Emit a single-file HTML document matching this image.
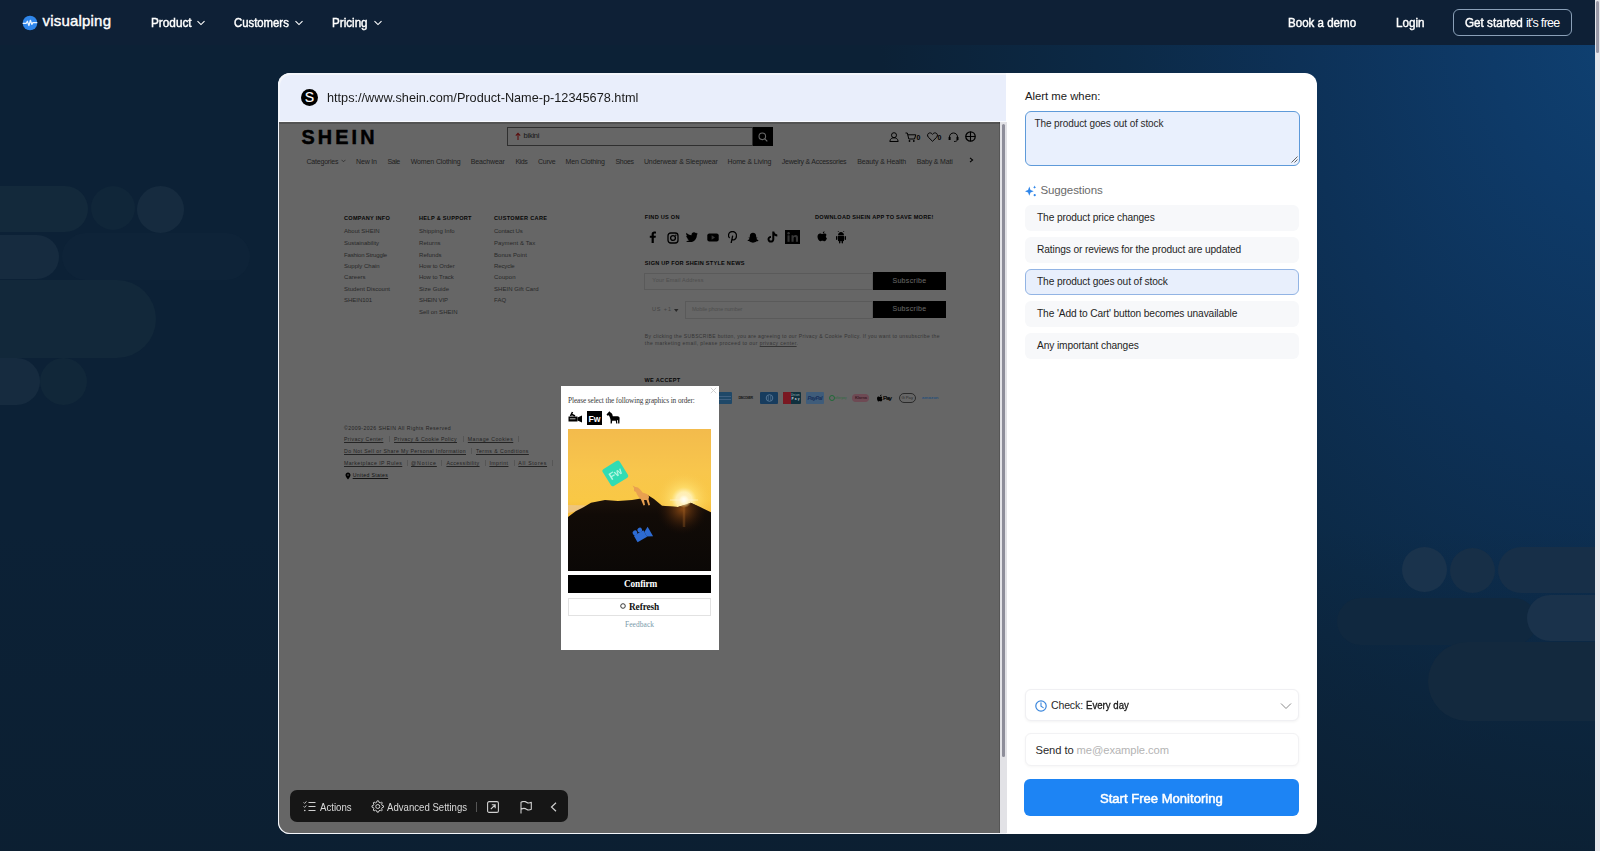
<!DOCTYPE html><html><head><meta charset="utf-8"><style>
*{box-sizing:border-box;margin:0;padding:0}
html,body{width:1600px;height:851px;overflow:hidden}
body{position:relative;font-family:"Liberation Sans",sans-serif;background:#0c2136;color:#111}
.a{position:absolute}
.t{position:absolute;white-space:nowrap;line-height:1}
.sh{position:absolute;border-radius:999px}
</style></head><body>
<div class="a" style="left:0;top:45px;width:1595px;height:806px;overflow:hidden;background:#0c2136">
<div class="a" style="left:0;top:0;width:1595px;height:806px;background:radial-gradient(ellipse 760px 980px at 1640px -30px,#0f4274 0%,#0e3a68 20%,#0d3157 45%,#0c2a47 68%,rgba(12,33,54,0) 100%)"></div>
<div class="a" style="left:0;top:0;width:1595px;height:806px;background:linear-gradient(180deg,rgba(12,30,47,0) 60%,rgba(12,30,47,0.6) 100%)"></div>
<div class="sh" style="left:-40px;top:141.0px;width:128px;height:46px;background:#13293b;filter:blur(0.7px)"></div>
<div class="sh" style="left:91px;top:141.0px;width:44px;height:44px;background:#102639;filter:blur(0.7px)"></div>
<div class="sh" style="left:136.5px;top:141.0px;width:47px;height:47px;background:#162b3f;filter:blur(0.7px)"></div>
<div class="sh" style="left:62px;top:188.0px;width:188px;height:47px;background:#0e2338;filter:blur(0.7px)"></div>
<div class="sh" style="left:-40px;top:189.6px;width:99px;height:44px;background:#162b3f;filter:blur(0.7px)"></div>
<div class="sh" style="left:-40px;top:235.0px;width:196px;height:78px;background:#12283a;filter:blur(0.7px)"></div>
<div class="sh" style="left:-40px;top:313.0px;width:80px;height:47px;background:#162b3f;filter:blur(0.7px)"></div>
<div class="sh" style="left:39.5px;top:313.0px;width:47px;height:47px;background:#112739;filter:blur(0.7px)"></div>
<div class="sh" style="left:1402.3px;top:502.0px;width:45px;height:45px;background:#1a334c;filter:blur(0.7px)"></div>
<div class="sh" style="left:1450px;top:503.0px;width:45px;height:45px;background:#172f47;filter:blur(0.7px)"></div>
<div class="sh" style="left:1497.5px;top:502.0px;width:150px;height:46px;background:#172f48;filter:blur(0.7px)"></div>
<div class="sh" style="left:1336.5px;top:552.6px;width:200px;height:47px;background:#10283f;filter:blur(0.7px)"></div>
<div class="sh" style="left:1527px;top:549.8px;width:120px;height:46.25px;background:#1a324b;filter:blur(0.7px)"></div>
<div class="sh" style="left:1428px;top:597.0px;width:220px;height:79px;background:#13293e;filter:blur(0.7px)"></div>
</div>
<div class="a" style="left:0.00px;top:0.00px;width:1595.00px;height:45.00px;background:#0e2036"></div>
<svg class="a" style="left:22.00px;top:15.00px;" width="16" height="16" viewBox="0 0 16 16"><circle cx="8" cy="8" r="7.3" fill="#2f86ea"/><path d="M1.2 8.3 H4.2 L5.4 6.2 L6.9 10.6 L8.4 5.3 L9.8 9.4 L10.9 7.6 H14.8" fill="none" stroke="#eaf4ff" stroke-width="1.3" stroke-linejoin="round" stroke-linecap="round"/></svg>
<div class="t" style="left:42.50px;top:13.45px;font-size:15px;color:#fff;letter-spacing:0.199px;-webkit-text-stroke:0.4px #fff">visualping</div>
<div class="t" style="left:150.60px;top:16.57px;font-size:12.5px;color:#fff;transform:scaleX(0.9425);transform-origin:0 0;-webkit-text-stroke:0.45px #fff">Product</div>
<svg class="a" style="left:196.00px;top:20.00px;" width="10" height="6" viewBox="0 0 10 6"><path d="M1.5 1.2 L5 4.6 L8.5 1.2" fill="none" stroke="#fff" stroke-width="1.1"/></svg>
<div class="t" style="left:234.00px;top:16.57px;font-size:12.5px;color:#fff;transform:scaleX(0.9068);transform-origin:0 0;-webkit-text-stroke:0.45px #fff">Customers</div>
<svg class="a" style="left:294.00px;top:20.00px;" width="10" height="6" viewBox="0 0 10 6"><path d="M1.5 1.2 L5 4.6 L8.5 1.2" fill="none" stroke="#fff" stroke-width="1.1"/></svg>
<div class="t" style="left:332.00px;top:16.57px;font-size:12.5px;color:#fff;transform:scaleX(0.9317);transform-origin:0 0;-webkit-text-stroke:0.45px #fff">Pricing</div>
<svg class="a" style="left:373.00px;top:20.00px;" width="10" height="6" viewBox="0 0 10 6"><path d="M1.5 1.2 L5 4.6 L8.5 1.2" fill="none" stroke="#fff" stroke-width="1.1"/></svg>
<div class="t" style="left:1288.40px;top:16.57px;font-size:12.5px;color:#fff;transform:scaleX(0.9246);transform-origin:0 0;-webkit-text-stroke:0.45px #fff">Book a demo</div>
<div class="t" style="left:1396.30px;top:16.57px;font-size:12.5px;color:#fff;transform:scaleX(0.9318);transform-origin:0 0;-webkit-text-stroke:0.45px #fff">Login</div>
<div class="a" style="left:1453.00px;top:9.00px;width:119.00px;height:27.00px;background:transparent;border:1px solid #8aa0b8;border-radius:6px"></div>
<div class="t" style="left:1464.70px;top:16.57px;font-size:12.5px;color:#fff;transform:scaleX(0.9347);transform-origin:0 0;-webkit-text-stroke:0.45px #fff">Get started</div>
<div class="t" style="left:1526.00px;top:16.57px;font-size:12.5px;color:#fff;letter-spacing:-0.7px">it's free</div>
<div class="a" style="left:1595.00px;top:0.00px;width:5.00px;height:851.00px;background:#e6e6ea"></div>
<div class="a" style="left:1596.00px;top:1.00px;width:3.00px;height:52.00px;background:#9b9aa8;border-radius:2px"></div>
<div class="a" style="left:278.00px;top:73.00px;width:1039.00px;height:761.00px;background:#fff;border-radius:12px"></div>
<div class="a" style="left:278.00px;top:73.00px;width:728.00px;height:761.00px;background:#f4f6fb;border-top-left-radius:12px;border-bottom-left-radius:12px"></div>
<div class="a" style="left:279.50px;top:74.50px;width:726.50px;height:46.50px;background:#e9eefb;border-top-left-radius:11px"></div>
<div class="a" style="left:278.00px;top:121.00px;width:728.00px;height:1.00px;background:#f8faff"></div>
<svg class="a" style="left:301.00px;top:89.00px;" width="17" height="17" viewBox="0 0 17 17"><circle cx="8.5" cy="8.5" r="8.5" fill="#000"/><text x="8.5" y="13.4" text-anchor="middle" font-family="Liberation Sans" font-size="14" fill="#fff" stroke="#fff" stroke-width="0.15">S</text></svg>
<div class="t" style="left:326.70px;top:90.54px;font-size:13.6px;color:#1a1a1a;transform:scaleX(0.9343);transform-origin:0 0">https://www.shein.com/Product-Name-p-12345678.html</div>
<div class="a" style="left:279px;top:122px;width:721px;height:711px;overflow:hidden;background:#fff;border-bottom-left-radius:11px" id="shot">
<div class="t" style="left:22.50px;top:5.77px;font-size:19.8px;color:#000;font-weight:700;letter-spacing:3.136px;-webkit-text-stroke:0.5px #000">SHEIN</div>
<div class="a" style="left:228.00px;top:5.35px;width:245.50px;height:18.90px;background:#fff;border:1.6px solid #777"></div>
<div class="a" style="left:473.50px;top:5.35px;width:20.00px;height:18.90px;background:#000"></div>
<svg class="a" style="left:478.50px;top:9.50px;" width="10" height="10" viewBox="0 0 10 10"><circle cx="4.3" cy="4.3" r="3.3" fill="none" stroke="#fff" stroke-width="1.1"/><path d="M6.8 6.8 L9.3 9.3" stroke="#fff" stroke-width="1.2"/></svg>
<svg class="a" style="left:235.50px;top:10.00px;" width="6" height="8" viewBox="0 0 6 8"><path d="M3 8 V1.5 M0.8 3.6 L3 1.2 L5.2 3.6" fill="none" stroke="#e02020" stroke-width="1.1"/></svg>
<div class="t" style="left:244.60px;top:9.93px;font-size:7.5px;color:#3a3a3a;letter-spacing:-0.258px">bikini</div>
<svg class="a" style="left:609.50px;top:9.50px;" width="10" height="10" viewBox="0 0 10 10"><circle cx="5" cy="3.2" r="2.5" fill="none" stroke="#000" stroke-width="1"/><path d="M0.8 9.5 C1.2 6.5 3 5.8 5 5.8 C7 5.8 8.8 6.5 9.2 9.5 Z" fill="none" stroke="#000" stroke-width="1"/></svg>
<svg class="a" style="left:626.00px;top:9.50px;" width="12" height="10" viewBox="0 0 12 10"><path d="M0.5 1 H2.3 L3.8 7 H9.5 L10.8 2.8 H3" fill="none" stroke="#000" stroke-width="1"/><circle cx="4.5" cy="9" r="0.9" fill="#000"/><circle cx="8.8" cy="9" r="0.9" fill="#000"/></svg>
<div class="t" style="left:637.50px;top:11.85px;font-size:7px;color:#000;font-weight:700;letter-spacing:0.607px">0</div>
<svg class="a" style="left:647.50px;top:9.50px;" width="11" height="10" viewBox="0 0 11 10"><path d="M5.5 9.3 L1.3 5.2 C0 3.8 0.4 1.3 2.6 0.9 C3.9 0.7 4.9 1.5 5.5 2.4 C6.1 1.5 7.1 0.7 8.4 0.9 C10.6 1.3 11 3.8 9.7 5.2 Z" fill="none" stroke="#000" stroke-width="1"/></svg>
<div class="t" style="left:658.50px;top:11.85px;font-size:7px;color:#000;font-weight:700;letter-spacing:0.607px">0</div>
<svg class="a" style="left:668.50px;top:9.50px;" width="11" height="10" viewBox="0 0 11 10"><path d="M1.5 6 V5 C1.5 2.5 3.3 1 5.5 1 C7.7 1 9.5 2.5 9.5 5 V6.5" fill="none" stroke="#000" stroke-width="1"/><rect x="0.6" y="5" width="2" height="3" fill="#000"/><rect x="8.5" y="5" width="2" height="3" fill="#000"/><path d="M9.5 8 C9 9.2 7.5 9.5 6 9.5" fill="none" stroke="#000" stroke-width="0.9"/></svg>
<svg class="a" style="left:685.50px;top:9.00px;" width="11" height="11" viewBox="0 0 11 11"><circle cx="5.5" cy="5.5" r="4.7" fill="none" stroke="#000" stroke-width="1.3"/><path d="M0.8 5.5 H10.2 M5.5 0.8 V10.2" stroke="#000" stroke-width="1.1"/></svg>
<div class="t" style="left:27.50px;top:35.55px;font-size:7px;color:#555;letter-spacing:-0.206px">Categories</div>
<div class="t" style="left:77.00px;top:35.55px;font-size:7px;color:#555;letter-spacing:-0.157px">New In</div>
<div class="t" style="left:108.50px;top:35.55px;font-size:7px;color:#555;letter-spacing:-0.42px">Sale</div>
<div class="t" style="left:131.75px;top:35.55px;font-size:7px;color:#555;letter-spacing:-0.128px">Women Clothing</div>
<div class="t" style="left:191.75px;top:35.55px;font-size:7px;color:#555;letter-spacing:-0.121px">Beachwear</div>
<div class="t" style="left:236.40px;top:35.55px;font-size:7px;color:#555;letter-spacing:-0.439px">Kids</div>
<div class="t" style="left:259.00px;top:35.55px;font-size:7px;color:#555;letter-spacing:-0.268px">Curve</div>
<div class="t" style="left:286.60px;top:35.55px;font-size:7px;color:#555;letter-spacing:-0.168px">Men Clothing</div>
<div class="t" style="left:336.50px;top:35.55px;font-size:7px;color:#555;letter-spacing:-0.337px">Shoes</div>
<div class="t" style="left:364.90px;top:35.55px;font-size:7px;color:#555;letter-spacing:-0.094px">Underwear &amp; Sleepwear</div>
<div class="t" style="left:448.50px;top:35.55px;font-size:7px;color:#555;letter-spacing:-0.143px">Home &amp; Living</div>
<div class="t" style="left:502.75px;top:35.55px;font-size:7px;color:#555;letter-spacing:-0.239px">Jewelry &amp; Accessories</div>
<div class="t" style="left:578.20px;top:35.55px;font-size:7px;color:#555;letter-spacing:-0.11px">Beauty &amp; Health</div>
<div class="t" style="left:637.75px;top:35.55px;font-size:7px;color:#555;letter-spacing:-0.174px">Baby &amp; Mati</div>
<svg class="a" style="left:61.50px;top:37.00px;" width="5" height="4" viewBox="0 0 5 4"><path d="M0.5 0.8 L2.5 2.8 L4.5 0.8" fill="none" stroke="#555" stroke-width="0.7"/></svg>
<svg class="a" style="left:690.00px;top:35.00px;" width="5" height="6" viewBox="0 0 5 6"><path d="M1 0.8 L3.6 3 L1 5.2" fill="none" stroke="#000" stroke-width="1.1"/></svg>
<div class="t" style="left:65.00px;top:93.84px;font-size:5.6px;color:#111;font-weight:700;letter-spacing:0.264px">COMPANY INFO</div>
<div class="t" style="left:140.00px;top:93.84px;font-size:5.6px;color:#111;font-weight:700;letter-spacing:0.269px">HELP &amp; SUPPORT</div>
<div class="t" style="left:215.00px;top:93.84px;font-size:5.6px;color:#111;font-weight:700;letter-spacing:0.307px">CUSTOMER CARE</div>
<div class="t" style="left:65.00px;top:106.40px;font-size:6px;color:#686868;letter-spacing:0.002px">About SHEIN</div>
<div class="t" style="left:65.00px;top:117.85px;font-size:6px;color:#686868;letter-spacing:-0.019px">Sustainability</div>
<div class="t" style="left:65.00px;top:129.50px;font-size:6px;color:#686868;letter-spacing:-0.144px">Fashion Struggle</div>
<div class="t" style="left:65.00px;top:140.70px;font-size:6px;color:#686868;letter-spacing:0.001px">Supply Chain</div>
<div class="t" style="left:65.00px;top:152.35px;font-size:6px;color:#686868;letter-spacing:0.043px">Careers</div>
<div class="t" style="left:65.00px;top:163.80px;font-size:6px;color:#686868;letter-spacing:0.02px">Student Discount</div>
<div class="t" style="left:65.00px;top:175.40px;font-size:6px;color:#686868;letter-spacing:-0.021px">SHEIN101</div>
<div class="t" style="left:140.00px;top:106.40px;font-size:6px;color:#686868;letter-spacing:0.056px">Shipping Info</div>
<div class="t" style="left:140.00px;top:117.85px;font-size:6px;color:#686868;letter-spacing:0.099px">Returns</div>
<div class="t" style="left:140.00px;top:129.50px;font-size:6px;color:#686868;letter-spacing:0.042px">Refunds</div>
<div class="t" style="left:140.00px;top:140.70px;font-size:6px;color:#686868;letter-spacing:0.002px">How to Order</div>
<div class="t" style="left:140.00px;top:152.35px;font-size:6px;color:#686868;letter-spacing:-0.033px">How to Track</div>
<div class="t" style="left:140.00px;top:163.80px;font-size:6px;color:#686868;letter-spacing:0.072px">Size Guide</div>
<div class="t" style="left:140.00px;top:175.40px;font-size:6px;color:#686868;letter-spacing:-0.084px">SHEIN VIP</div>
<div class="t" style="left:140.00px;top:187.10px;font-size:6px;color:#686868;letter-spacing:0.013px">Sell on SHEIN</div>
<div class="t" style="left:215.00px;top:106.40px;font-size:6px;color:#686868;letter-spacing:-0.098px">Contact Us</div>
<div class="t" style="left:215.00px;top:117.85px;font-size:6px;color:#686868;letter-spacing:0.079px">Payment &amp; Tax</div>
<div class="t" style="left:215.00px;top:129.50px;font-size:6px;color:#686868;letter-spacing:0.054px">Bonus Point</div>
<div class="t" style="left:215.00px;top:140.70px;font-size:6px;color:#686868;letter-spacing:-0.107px">Recycle</div>
<div class="t" style="left:215.00px;top:152.35px;font-size:6px;color:#686868;letter-spacing:0.116px">Coupon</div>
<div class="t" style="left:215.00px;top:163.80px;font-size:6px;color:#686868;letter-spacing:0.035px">SHEIN Gift Card</div>
<div class="t" style="left:215.00px;top:175.40px;font-size:6px;color:#686868;letter-spacing:0.124px">FAQ</div>
<div class="t" style="left:365.85px;top:92.94px;font-size:5.6px;color:#111;font-weight:700;letter-spacing:0.259px">FIND US ON</div>
<div class="t" style="left:536.00px;top:92.94px;font-size:5.6px;color:#111;font-weight:700;letter-spacing:0.243px">DOWNLOAD SHEIN APP TO SAVE MORE!</div>
<svg class="a" style="left:369.00px;top:109.00px;" width="9" height="12" viewBox="0 0 9 12"><path d="M5.8 12 V6.8 H7.6 L7.9 4.8 H5.8 V3.5 C5.8 2.9 6 2.5 6.9 2.5 H8 V0.7 C7.7 0.6 7.1 0.5 6.3 0.5 C4.7 0.5 3.6 1.5 3.6 3.2 V4.8 H1.8 V6.8 H3.6 V12 Z" fill="#000"/></svg>
<svg class="a" style="left:387.50px;top:109.50px;" width="12" height="12" viewBox="0 0 12 12"><rect x="1" y="1" width="10" height="10" rx="2.8" fill="none" stroke="#000" stroke-width="1.3"/><circle cx="6" cy="6" r="2.4" fill="none" stroke="#000" stroke-width="1.3"/><circle cx="8.8" cy="3.2" r="0.7" fill="#000"/></svg>
<svg class="a" style="left:407.00px;top:110.00px;" width="12" height="10" viewBox="0 0 12 10"><path d="M11.5 1.3 C11.1 1.5 10.6 1.6 10.2 1.7 C10.7 1.4 11 1 11.2 0.4 C10.8 0.7 10.3 0.9 9.8 1 C9.3 0.5 8.7 0.2 8 0.2 C6.6 0.2 5.5 1.3 5.5 2.7 C5.5 2.9 5.5 3.1 5.6 3.3 C3.5 3.2 1.7 2.2 0.5 0.7 C0.3 1.1 0.2 1.5 0.2 2 C0.2 2.9 0.6 3.6 1.3 4.1 C0.9 4.1 0.5 4 0.2 3.8 C0.2 5 1.1 6.1 2.2 6.3 C1.8 6.4 1.4 6.4 1.1 6.3 C1.4 7.3 2.4 8.1 3.5 8.1 C2.6 8.8 1.5 9.2 0.3 9.2 H0 C1.1 9.9 2.4 10.3 3.8 10.3 C8.4 10.3 10.9 6.5 10.9 3.2 V2.9 C11.3 2.5 11.6 2 11.5 1.3 Z" fill="#000"/></svg>
<svg class="a" style="left:427.50px;top:111.00px;" width="12" height="9" viewBox="0 0 12 9"><rect x="0.3" y="0.5" width="11.4" height="8" rx="2" fill="#000"/><path d="M4.6 2.3 L8 4.5 L4.6 6.7 Z" fill="#888"/></svg>
<svg class="a" style="left:449.00px;top:109.00px;" width="9" height="12" viewBox="0 0 9 12"><path d="M3.2 11.8 L4.6 5.2 M3.9 8.4 C4.6 8.9 5.4 9 6 8.8 C7.6 8.3 8.5 6.6 8.5 4.8 C8.5 2.3 6.7 0.5 4.4 0.5 C2 0.5 0.5 2.3 0.5 4.4 C0.5 5.3 0.8 6.1 1.3 6.6" fill="none" stroke="#000" stroke-width="1.3" stroke-linecap="round"/></svg>
<svg class="a" style="left:467.50px;top:109.50px;" width="12" height="11" viewBox="0 0 12 11"><path d="M6 0.8 C8 0.8 9.2 2.3 9.2 4.2 V5.6 L10.6 5.4 L9.5 6.8 C10 7.8 11.2 8.2 11.6 8.4 C11 9.2 9.8 9 9.2 9.5 C8.5 10.6 7 10.2 6 10.7 C5 10.2 3.5 10.6 2.8 9.5 C2.2 9 1 9.2 0.4 8.4 C0.8 8.2 2 7.8 2.5 6.8 L1.4 5.4 L2.8 5.6 V4.2 C2.8 2.3 4 0.8 6 0.8 Z" fill="#000"/></svg>
<svg class="a" style="left:488.00px;top:109.00px;" width="11" height="12" viewBox="0 0 11 12"><path d="M5.3 0.5 H7.3 C7.4 2 8.5 3.3 10.3 3.4 V5.4 C9.1 5.4 8.1 5 7.3 4.4 V8.2 C7.3 10.2 5.8 11.6 3.9 11.6 C2 11.6 0.5 10.1 0.5 8.2 C0.5 6.3 2.1 4.8 4 4.9 V7 C3.2 6.8 2.5 7.4 2.5 8.2 C2.5 9 3.1 9.6 3.9 9.6 C4.7 9.6 5.3 9 5.3 8.2 Z" fill="#000"/></svg>
<svg class="a" style="left:506.00px;top:108.00px;" width="15" height="14" viewBox="0 0 15 14"><rect x="0" y="0" width="15" height="14" fill="#000"/><rect x="2.5" y="5.3" width="2.1" height="6.5" fill="#888"/><circle cx="3.55" cy="3.2" r="1.2" fill="#888"/><path d="M6.5 5.3 H8.5 V6.3 C9 5.5 9.8 5.1 10.8 5.1 C12.4 5.1 13 6.1 13 7.8 V11.8 H10.9 V8.3 C10.9 7.4 10.6 6.9 9.8 6.9 C9 6.9 8.6 7.5 8.6 8.4 V11.8 H6.5 Z" fill="#888"/></svg>
<svg class="a" style="left:537.50px;top:109.00px;" width="11" height="12" viewBox="0 0 11 12"><path d="M7.5 0.3 C7.6 1.3 6.8 2.4 5.8 2.4 C5.7 1.4 6.5 0.4 7.5 0.3 Z M9.6 4.1 C8.5 4.8 8.6 6.6 9.9 7.2 C9.5 8.5 8.6 10.3 7.5 10.3 C6.6 10.3 6.4 9.8 5.4 9.8 C4.4 9.8 4.1 10.3 3.3 10.3 C2.1 10.3 0.5 7.8 0.5 5.6 C0.5 3.5 1.9 2.6 3 2.6 C4 2.6 4.6 3.1 5.3 3.1 C6 3.1 6.6 2.6 7.6 2.6 C8.3 2.6 9 2.9 9.6 4.1 Z" fill="#000"/></svg>
<svg class="a" style="left:556.00px;top:109.00px;" width="12" height="13" viewBox="0 0 12 13"><path d="M3 4.2 C3 2.4 4.4 1 6 1 C7.6 1 9 2.4 9 4.2 Z" fill="#000"/><path d="M3.7 1 L3 0 M8.3 1 L9 0" stroke="#000" stroke-width="0.7"/><rect x="3" y="4.8" width="6" height="5.2" rx="0.6" fill="#000"/><rect x="1" y="5" width="1.4" height="4" rx="0.7" fill="#000"/><rect x="9.6" y="5" width="1.4" height="4" rx="0.7" fill="#000"/><rect x="4" y="9.5" width="1.4" height="3" rx="0.7" fill="#000"/><rect x="6.6" y="9.5" width="1.4" height="3" rx="0.7" fill="#000"/></svg>
<div class="t" style="left:365.85px;top:139.44px;font-size:5.6px;color:#111;font-weight:700;letter-spacing:0.249px">SIGN UP FOR SHEIN STYLE NEWS</div>
<div class="a" style="left:365.40px;top:150.60px;width:229.00px;height:17.50px;background:#fff;border:1px solid #e0e0e0"></div>
<div class="t" style="left:373.30px;top:156.32px;font-size:5.5px;color:#c4c4c4;letter-spacing:0.2px">Your Email Address</div>
<div class="a" style="left:594.40px;top:150.30px;width:72.20px;height:17.80px;background:#000"></div>
<div class="t" style="left:613.40px;top:155.25px;font-size:7px;color:#fff;letter-spacing:0.334px">Subscribe</div>
<div class="t" style="left:373.00px;top:184.82px;font-size:5.5px;color:#aaa;letter-spacing:0.89px">US +1</div>
<svg class="a" style="left:395.00px;top:186.50px;" width="5" height="4" viewBox="0 0 5 4"><path d="M0 0 H4.5 L2.25 3 Z" fill="#666"/></svg>
<div class="a" style="left:405.70px;top:178.70px;width:188.70px;height:17.90px;background:#fff;border:1px solid #e0e0e0"></div>
<div class="t" style="left:412.90px;top:184.82px;font-size:5.5px;color:#c4c4c4;letter-spacing:-0.15px">Mobile phone number</div>
<div class="a" style="left:594.40px;top:178.50px;width:72.20px;height:17.80px;background:#000"></div>
<div class="t" style="left:613.40px;top:183.45px;font-size:7px;color:#fff;letter-spacing:0.334px">Subscribe</div>
<div class="t" style="left:365.85px;top:212.05px;font-size:5px;color:#888;letter-spacing:0.353px">By clicking the SUBSCRIBE button, you are agreeing to our Privacy &amp; Cookie Policy. If you want to unsubscribe the</div>
<div class="t" style="left:365.85px;top:219.35px;font-size:5px;color:#888;letter-spacing:0.434px">the marketing email, please proceed to our <u>privacy center</u>.</div>
<div class="t" style="left:365.40px;top:255.84px;font-size:5.6px;color:#111;font-weight:700;letter-spacing:0.317px">WE ACCEPT</div>
<div class="t" style="left:65.00px;top:304.38px;font-size:5.2px;color:#5a5a5a;letter-spacing:0.402px">&copy;2009-2026 SHEIN All Rights Reserved</div>
<div class="t" style="left:65.00px;top:314.78px;font-size:5.2px;color:#5a5a5a;letter-spacing:0.383px"><u>Privacy Center</u></div>
<div class="a" style="left:109.60px;top:314.20px;width:0.60px;height:6.00px;background:#d8d8d8"></div>
<div class="t" style="left:115.00px;top:314.78px;font-size:5.2px;color:#5a5a5a;letter-spacing:0.356px"><u>Privacy &amp; Cookie Policy</u></div>
<div class="a" style="left:183.50px;top:314.20px;width:0.60px;height:6.00px;background:#d8d8d8"></div>
<div class="t" style="left:188.80px;top:314.78px;font-size:5.2px;color:#5a5a5a;letter-spacing:0.467px"><u>Manage Cookies</u></div>
<div class="a" style="left:238.50px;top:314.20px;width:0.60px;height:6.00px;background:#d8d8d8"></div>
<div class="t" style="left:65.00px;top:326.78px;font-size:5.2px;color:#5a5a5a;letter-spacing:0.381px"><u>Do Not Sell or Share My Personal Information</u></div>
<div class="a" style="left:191.60px;top:326.20px;width:0.60px;height:6.00px;background:#d8d8d8"></div>
<div class="t" style="left:197.00px;top:326.78px;font-size:5.2px;color:#5a5a5a;letter-spacing:0.437px"><u>Terms &amp; Conditions</u></div>
<div class="t" style="left:65.00px;top:338.78px;font-size:5.2px;color:#5a5a5a;letter-spacing:0.453px"><u>Marketplace IP Rules</u></div>
<div class="a" style="left:127.50px;top:338.20px;width:0.60px;height:6.00px;background:#d8d8d8"></div>
<div class="t" style="left:132.00px;top:338.78px;font-size:5.2px;color:#5a5a5a;letter-spacing:0.838px"><u>@Notice</u></div>
<div class="a" style="left:162.00px;top:338.20px;width:0.60px;height:6.00px;background:#d8d8d8"></div>
<div class="t" style="left:167.40px;top:338.78px;font-size:5.2px;color:#5a5a5a;letter-spacing:0.379px"><u>Accessibility</u></div>
<div class="a" style="left:205.70px;top:338.20px;width:0.60px;height:6.00px;background:#d8d8d8"></div>
<div class="t" style="left:210.40px;top:338.78px;font-size:5.2px;color:#5a5a5a;letter-spacing:0.458px"><u>Imprint</u></div>
<div class="a" style="left:234.60px;top:338.20px;width:0.60px;height:6.00px;background:#d8d8d8"></div>
<div class="t" style="left:239.30px;top:338.78px;font-size:5.2px;color:#5a5a5a;letter-spacing:0.656px"><u>All Stores</u></div>
<div class="a" style="left:273.00px;top:338.20px;width:0.60px;height:6.00px;background:#d8d8d8"></div>
<svg class="a" style="left:65.60px;top:350.00px;" width="6" height="8" viewBox="0 0 6 8"><path d="M3 7.5 C1.5 5.5 0.5 4.3 0.5 3 C0.5 1.6 1.6 0.5 3 0.5 C4.4 0.5 5.5 1.6 5.5 3 C5.5 4.3 4.5 5.5 3 7.5 Z" fill="#000"/><circle cx="3" cy="3" r="1" fill="#888"/></svg>
<div class="t" style="left:73.70px;top:351.08px;font-size:5.2px;color:#333;letter-spacing:0.33px"><u>United States</u></div>
<div class="a" style="left:0;top:0;width:721px;height:711px;background:rgba(0,0,0,0.6)"></div>
<div class="a" style="left:421.00px;top:270.20px;width:32.00px;height:11.50px;background:#1f4868;border-radius:1px"></div>
<div class="a" style="left:424.00px;top:273.70px;width:28.00px;height:1.00px;background:#3f6080"></div>
<div class="a" style="left:424.00px;top:276.70px;width:28.00px;height:1.00px;background:#3f6080"></div>
<div class="t" style="left:459.50px;top:274.94px;font-size:3.6px;color:#1a1a1a;font-weight:700;letter-spacing:-0.61px">DISCOVER</div>
<div class="a" style="left:481.00px;top:270.20px;width:17.80px;height:11.50px;background:#173c5e;border-radius:1px"></div>
<svg class="a" style="left:485.50px;top:272.00px;" width="9" height="8" viewBox="0 0 9 8"><circle cx="4.5" cy="4" r="3.3" fill="none" stroke="#5a7a98" stroke-width="0.9"/><path d="M3.3 1.5 V6.5 M5.7 1.5 V6.5" stroke="#5a7a98" stroke-width="0.6"/></svg>
<div class="a" style="left:504.00px;top:270.20px;width:17.80px;height:11.50px;background:#10303e;border-radius:1px"></div>
<div class="a" style="left:504.00px;top:270.20px;width:8.00px;height:11.50px;background:#7a1822;border-radius:1px 0 0 1px"></div>
<div class="t" style="left:512.00px;top:272.99px;font-size:2.6px;color:#b8c4cc;letter-spacing:0.431px">Union</div>
<div class="t" style="left:512.50px;top:276.48px;font-size:3.2px;color:#c8d0d8;font-weight:700;letter-spacing:1.164px">Pay</div>
<div class="a" style="left:527.30px;top:270.20px;width:17.50px;height:11.50px;background:#3f5c7a;border-radius:1px"></div>
<div class="t" style="left:528.50px;top:273.74px;font-size:5.6px;color:#17305a;font-weight:700;letter-spacing:-0.67px;font-style:italic">PayPal</div>
<svg class="a" style="left:550.00px;top:273.00px;" width="6" height="6" viewBox="0 0 6 6"><circle cx="3" cy="3" r="2.5" fill="none" stroke="#1f6a38" stroke-width="1"/></svg>
<div class="t" style="left:556.00px;top:275.22px;font-size:2.8px;color:#3a6a48;font-weight:700;letter-spacing:0.088px">afterpay</div>
<div class="a" style="left:573.30px;top:271.70px;width:17.20px;height:8.50px;background:#6e4a54;border-radius:4px"></div>
<div class="t" style="left:576.00px;top:274.20px;font-size:4px;color:#3a1a24;font-weight:700;letter-spacing:-0.09px">Klarna</div>
<svg class="a" style="left:597.80px;top:271.80px;" width="6" height="8" viewBox="0 0 6 8"><path d="M3 2.2 C3 1.2 3.7 0.5 4.5 0.4 C4.6 1.3 3.9 2.1 3 2.2 Z M5.2 3.4 C4.5 3.8 4.6 5 5.5 5.3 C5.2 6.3 4.7 7.4 4 7.4 C3.5 7.4 3.3 7.1 2.8 7.1 C2.2 7.1 2 7.4 1.5 7.4 C0.8 7.4 0 5.8 0 4.5 C0 3.2 0.8 2.6 1.6 2.6 C2.1 2.6 2.5 2.9 2.9 2.9 C3.3 2.9 3.7 2.6 4.2 2.6 C4.6 2.6 5 2.8 5.2 3.4 Z" fill="#000"/></svg>
<div class="t" style="left:604.00px;top:273.23px;font-size:6.2px;color:#000;letter-spacing:-0.931px;-webkit-text-stroke:0.2px #000">Pay</div>
<div class="a" style="left:619.50px;top:271.00px;width:17.50px;height:10.00px;background:transparent;border:0.9px solid #2a2a2a;border-radius:5px"></div>
<div class="t" style="left:622.50px;top:273.93px;font-size:4.2px;color:#2a2a2a;letter-spacing:-0.034px">G Pay</div>
<div class="t" style="left:643.00px;top:273.55px;font-size:4.3px;color:#27507a;font-weight:700;letter-spacing:0.1px">amazon</div>
<div class="a" style="left:281.50px;top:263.90px;width:158.30px;height:263.90px;background:#fff"></div>
<svg class="a" style="left:430.50px;top:265.00px;" width="7" height="7" viewBox="0 0 7 7"><path d="M0.8 0.8 L6.2 6.2 M6.2 0.8 L0.8 6.2" stroke="#c8c8c8" stroke-width="0.8"/></svg>
<div class="t" style="left:289.00px;top:274.54px;font-size:7.3px;color:#3a3a3a;font-family:'Liberation Serif',serif;letter-spacing:-0.1px">Please select the following graphics in order:</div>
<svg class="a" style="left:289.00px;top:289.00px;" width="15" height="12" viewBox="0 0 15 12"><path d="M0.5 5.5 H9.5 V10.5 H0.5 Z" fill="#000"/><path d="M9.5 6.5 L14 4.5 V11.5 L9.5 9.5 Z" fill="#000"/><path d="M2.5 5 L4.5 1 M3.5 3.3 L7 5" stroke="#000" stroke-width="1.6"/><path d="M1.8 7.8 H7.5" stroke="#fff" stroke-width="0.7"/></svg>
<div class="a" style="left:308.00px;top:288.80px;width:14.70px;height:14.50px;background:#000"></div>
<div class="t" style="left:309.50px;top:292.69px;font-size:8.6px;color:#fff;font-weight:700;letter-spacing:0.066px">Fw</div>
<svg class="a" style="left:327.00px;top:289.00px;" width="14" height="13" viewBox="0 0 14 13"><path d="M0.5 3.5 L2.5 1.2 L3.5 0.3 L4.2 1.2 C5 1.5 5.8 2.2 6.3 3.3 L6.8 5.2 H11.5 C12.8 5.2 13.5 6 13.6 7 L13.4 12.5 H12.2 L12 9 L11 9.6 L11.4 12.5 H10.2 L9.8 9.8 H6.2 L5.8 12.5 H4.6 L4.6 9 L4.2 7.5 C3.8 6 3.2 4.8 2.6 4.2 L1.5 4.8 Z" fill="#000"/></svg>
<svg class="a" style="left:289.00px;top:306.80px;" width="143.3" height="142.5" viewBox="0 0 143.3 142.5"><defs><linearGradient id="sky" x1="0" y1="0" x2="0" y2="1"><stop offset="0" stop-color="#f3bb4c"/><stop offset="0.3" stop-color="#f8c64c"/><stop offset="0.5" stop-color="#f9c845"/><stop offset="0.58" stop-color="#f7bd3c"/><stop offset="1" stop-color="#eea030"/></linearGradient><radialGradient id="sun" cx="116" cy="70.8" r="28" gradientUnits="userSpaceOnUse"><stop offset="0" stop-color="#ffffff"/><stop offset="0.22" stop-color="#fff8d0"/><stop offset="0.45" stop-color="#ffe070" stop-opacity="0.75"/><stop offset="1" stop-color="#f8c850" stop-opacity="0"/></radialGradient><radialGradient id="core" cx="116" cy="71" r="8" gradientUnits="userSpaceOnUse"><stop offset="0" stop-color="#ffffff"/><stop offset="0.45" stop-color="#fff6d0" stop-opacity="0.9"/><stop offset="1" stop-color="#ffd060" stop-opacity="0"/></radialGradient><radialGradient id="glow" cx="114" cy="80" r="26" gradientUnits="userSpaceOnUse"><stop offset="0" stop-color="#8a4a14" stop-opacity="0.95"/><stop offset="0.5" stop-color="#4a260c" stop-opacity="0.6"/><stop offset="1" stop-color="#1a0c06" stop-opacity="0"/></radialGradient><linearGradient id="mt" x1="0" y1="0" x2="0" y2="1"><stop offset="0" stop-color="#1e130b"/><stop offset="0.25" stop-color="#110b07"/><stop offset="1" stop-color="#0b0806"/></linearGradient></defs><rect width="143.3" height="142.5" fill="url(#sky)"/><rect width="143.3" height="142.5" fill="url(#sun)"/><path d="M0 76 L22 76.5 L14 81 L0 84 Z" fill="#e8c8a8" opacity="0.6"/><path d="M0 88 L8 82 L15 78.5 L23 73.7 L37 71 L50 72 L64 71 L73 69.5 L80.5 66.5 L86 70 L94 76.7 L110 78 L122.8 73.8 L131 77.5 L143.3 83.5 V142.5 H0 Z" fill="url(#mt)"/><path d="M86 70 L94 76.7 L110 78 L122.8 73.8 L131 77.5 L143.3 83.5 V115 H86 Z" fill="url(#glow)"/><circle cx="116" cy="71" r="8" fill="url(#core)"/><path d="M102 71 H130" stroke="#fff8e0" stroke-width="1.2" opacity="0.45"/><path d="M116 76 V98" stroke="#b06a28" stroke-width="2.5" opacity="0.3"/><g transform="translate(47.3,44.4) rotate(-32)"><rect x="-10" y="-10" width="20" height="20" rx="2.5" fill="#30dcb4"/><text x="0" y="3.8" text-anchor="middle" font-family="Liberation Sans" font-weight="700" font-size="10" fill="#e0fff0" opacity="0.75">Fw</text></g><path d="M66 59 L64.5 56.5 L67.5 58 L70 58.5 C72 60 73 61.5 74.5 63.5 L79 65 C81 66 81.5 68 80.5 70 L82 76 L80.5 76.5 L78.5 71 L76 71 L77 76 L75.5 76.5 L73 70.5 C71 68.5 69 66 68 63 L66 62 Z" fill="#e8a050"/><g transform="translate(74,105) rotate(-30)"><path d="M-8 -2.5 H3 V5 H-8 Z" fill="#2d6bd2"/><path d="M3 -0.5 L8.5 -3.5 V7.5 L3 4.5 Z" fill="#2d6bd2"/><circle cx="-5.5" cy="-4.5" r="2.4" fill="#2d6bd2"/><circle cx="0" cy="-4.5" r="2.4" fill="#2d6bd2"/></g></svg>
<div class="a" style="left:289.00px;top:453.10px;width:143.00px;height:18.10px;background:#000"></div>
<div class="t" style="left:345.00px;top:458.08px;font-size:9.3px;color:#fff;font-weight:700;font-family:'Liberation Serif',serif;letter-spacing:-0.13px">Confirm</div>
<div class="a" style="left:289.00px;top:475.80px;width:143.00px;height:17.80px;background:#fff;border:1px solid #e2e2e2"></div>
<svg class="a" style="left:341.00px;top:481.30px;" width="6" height="6" viewBox="0 0 6 6"><circle cx="3" cy="3" r="2.3" fill="none" stroke="#222" stroke-width="0.9"/></svg>
<div class="t" style="left:350.00px;top:480.58px;font-size:9.3px;color:#111;font-weight:700;font-family:'Liberation Serif',serif;letter-spacing:-0.102px">Refresh</div>
<div class="t" style="left:346.00px;top:499.16px;font-size:7.4px;color:#7a9aaa;font-family:'Liberation Serif',serif;letter-spacing:0.097px">Feedback</div>
</div>
<div class="a" style="left:279.00px;top:122.00px;width:721.00px;height:1.50px;background:rgba(0,0,0,0.18)"></div>
<div class="a" style="left:999.00px;top:122.00px;width:1.00px;height:711.00px;background:rgba(0,0,0,0.15)"></div>
<div class="a" style="left:1000.00px;top:122.00px;width:7.00px;height:711.00px;background:#e2e2e6"></div>
<div class="a" style="left:1002.00px;top:123.50px;width:3.00px;height:633.00px;background:#8e8e9a;border-radius:1.5px"></div>
<div class="t" style="left:1025.00px;top:90.89px;font-size:11.3px;color:#1a1a1a">Alert me when:</div>
<div class="a" style="left:1024.50px;top:110.50px;width:275.00px;height:55.00px;background:#e9f0fd;border:1.8px solid #5e9ad9;border-radius:6px"></div>
<div class="t" style="left:1034.50px;top:118.50px;font-size:10px;color:#2a2a2a;letter-spacing:-0.1px">The product goes out of stock</div>
<svg class="a" style="left:1291.00px;top:156.00px;" width="7" height="7" viewBox="0 0 7 7"><path d="M6.5 0.5 L0.5 6.5 M6.5 3.5 L3.5 6.5" stroke="#555" stroke-width="0.9"/></svg>
<svg class="a" style="left:1024.50px;top:184.50px;" width="12" height="12" viewBox="0 0 12 12"><path d="M4.3 1.6 L5.5 5 L8.7 6.2 L5.5 7.4 L4.3 10.8 L3.1 7.4 L-0.1 6.2 L3.1 5 Z" fill="#2f86ea"/><path d="M9.6 0.6 L10.1 1.7 L11.2 2.2 L10.1 2.7 L9.6 3.8 L9.1 2.7 L8 2.2 L9.1 1.7 Z" fill="#2f86ea"/><circle cx="9.7" cy="10.2" r="1.1" fill="#2f86ea"/></svg>
<div class="t" style="left:1040.40px;top:184.62px;font-size:11.5px;color:#6a6a6a;letter-spacing:-0.1px">Suggestions</div>
<div class="a" style="left:1024.50px;top:204.50px;width:274.00px;height:26.00px;background:#f7f8fa;border-radius:6px"></div>
<div class="t" style="left:1037.00px;top:213.23px;font-size:10.2px;color:#1f1f1f;letter-spacing:-0.12px">The product price changes</div>
<div class="a" style="left:1024.50px;top:236.50px;width:274.00px;height:26.00px;background:#f7f8fa;border-radius:6px"></div>
<div class="t" style="left:1037.00px;top:245.23px;font-size:10.2px;color:#1f1f1f;letter-spacing:-0.12px">Ratings or reviews for the product are updated</div>
<div class="a" style="left:1024.50px;top:268.50px;width:274.50px;height:26.00px;background:#e8effc;border:1px solid #92b4e4;border-radius:6px"></div>
<div class="t" style="left:1037.00px;top:277.23px;font-size:10.2px;color:#1f1f1f;letter-spacing:-0.12px">The product goes out of stock</div>
<div class="a" style="left:1024.50px;top:300.50px;width:274.00px;height:26.00px;background:#f7f8fa;border-radius:6px"></div>
<div class="t" style="left:1037.00px;top:309.23px;font-size:10.2px;color:#1f1f1f;letter-spacing:-0.12px">The 'Add to Cart' button becomes unavailable</div>
<div class="a" style="left:1024.50px;top:332.50px;width:274.00px;height:26.00px;background:#f7f8fa;border-radius:6px"></div>
<div class="t" style="left:1037.00px;top:341.23px;font-size:10.2px;color:#1f1f1f;letter-spacing:-0.12px">Any important changes</div>
<div class="a" style="left:1025.00px;top:689.00px;width:273.50px;height:32.30px;background:#fff;border:1px solid #f0f0f3;border-radius:6px;box-shadow:0 1px 3px rgba(0,0,0,0.05)"></div>
<svg class="a" style="left:1035.00px;top:700.00px;" width="12" height="12" viewBox="0 0 12 12"><circle cx="6" cy="6" r="5.2" fill="none" stroke="#3a86dc" stroke-width="1.2"/><path d="M6 2.8 V6.2 L8.2 7.6" fill="none" stroke="#3a86dc" stroke-width="1.1" stroke-linecap="round"/></svg>
<div class="t" style="left:1050.90px;top:699.99px;font-size:10.6px;color:#2a2a2a;letter-spacing:-0.15px">Check:</div>
<div class="t" style="left:1086.00px;top:700.93px;font-size:10.2px;color:#1a1a1a;transform:scaleX(0.9449);transform-origin:0 0;-webkit-text-stroke:0.3px #1a1a1a">Every day</div>
<svg class="a" style="left:1280.00px;top:702.00px;" width="12" height="8" viewBox="0 0 12 8"><path d="M1 1.5 L6 6.5 L11 1.5" fill="none" stroke="#8a8a8a" stroke-width="1"/></svg>
<div class="a" style="left:1025.00px;top:732.60px;width:273.50px;height:33.50px;background:#fff;border:1px solid #f2f2f4;border-radius:6px;box-shadow:0 1px 3px rgba(0,0,0,0.04)"></div>
<div class="t" style="left:1035.50px;top:744.78px;font-size:11.2px;color:#2a2a2a;letter-spacing:-0.05px">Send to</div>
<div class="t" style="left:1076.60px;top:744.78px;font-size:11.2px;color:#b4b4b4;letter-spacing:-0.08px">me@example.com</div>
<div class="a" style="left:1024.00px;top:779.30px;width:274.70px;height:37.00px;background:#1d84f4;border-radius:6px"></div>
<div class="t" style="left:1099.80px;top:791.85px;font-size:13px;color:#fff;transform:scaleX(1.0049);transform-origin:0 0;-webkit-text-stroke:0.5px #fff">Start Free Monitoring</div>
<div class="a" style="left:289.50px;top:790.40px;width:278.50px;height:32.10px;background:#161616;border-radius:7px"></div>
<svg class="a" style="left:303.00px;top:801.00px;" width="13" height="11" viewBox="0 0 13 11"><path d="M5.5 1.5 H12.5 M5.5 5.5 H12.5 M5.5 9.5 H12.5" stroke="#d0d0d0" stroke-width="1.1"/><path d="M0.6 1.4 L1.6 2.4 L3.4 0.4" fill="none" stroke="#d0d0d0" stroke-width="0.9"/><path d="M0.6 5.4 L1.6 6.4 L3.4 4.4" fill="none" stroke="#d0d0d0" stroke-width="0.9"/><circle cx="1.8" cy="9.5" r="0.8" fill="#d0d0d0"/></svg>
<div class="t" style="left:320.30px;top:801.52px;font-size:10.8px;color:#dadada;transform:scaleX(0.8953);transform-origin:0 0">Actions</div>
<svg class="a" style="left:370.50px;top:800.00px;" width="13" height="13" viewBox="0 0 13 13"><path d="M6.5 0.8 L7.6 0.9 L8 2.4 L9.2 2.9 L10.5 2.1 L11.3 2.9 L10.6 4.2 L11.1 5.4 L12.5 5.8 V7.2 L11.1 7.6 L10.6 8.8 L11.3 10.1 L10.5 10.9 L9.2 10.2 L8 10.7 L7.6 12.1 H6 L5.6 10.7 L4.4 10.2 L3.1 10.9 L2.2 10.1 L2.9 8.8 L2.4 7.6 L1 7.2 V5.8 L2.4 5.4 L2.9 4.2 L2.2 2.9 L3.1 2.1 L4.4 2.9 L5.6 2.4 L6 0.9 Z" fill="none" stroke="#d0d0d0" stroke-width="1" stroke-linejoin="round"/><circle cx="6.75" cy="6.5" r="2" fill="none" stroke="#d0d0d0" stroke-width="1"/></svg>
<div class="t" style="left:387.40px;top:801.52px;font-size:10.8px;color:#dadada;transform:scaleX(0.8897);transform-origin:0 0">Advanced Settings</div>
<div class="a" style="left:476.30px;top:801.50px;width:0.80px;height:10.50px;background:#555"></div>
<svg class="a" style="left:486.50px;top:801.00px;" width="12" height="12" viewBox="0 0 12 12"><rect x="0.6" y="0.6" width="10.8" height="10.8" rx="1.5" fill="none" stroke="#d0d0d0" stroke-width="1.1"/><path d="M3.8 8.2 L8 4 M4.8 3.8 H8.2 V7.2" fill="none" stroke="#d0d0d0" stroke-width="1.1"/></svg>
<svg class="a" style="left:519.50px;top:800.50px;" width="12" height="13" viewBox="0 0 12 13"><path d="M1 12.5 V1.2 C3.5 0 5.5 0.5 6.5 1.3 C7.8 2.2 9.5 2.3 11.3 1.3 V8.3 C9.5 9.3 7.8 9.2 6.5 8.3 C5.5 7.5 3.5 7 1 8.2" fill="none" stroke="#d0d0d0" stroke-width="1.1" stroke-linejoin="round"/></svg>
<svg class="a" style="left:549.50px;top:801.50px;" width="7" height="10" viewBox="0 0 7 10"><path d="M6 0.8 L1.5 5 L6 9.2" fill="none" stroke="#d0d0d0" stroke-width="1.2"/></svg>
</body></html>
